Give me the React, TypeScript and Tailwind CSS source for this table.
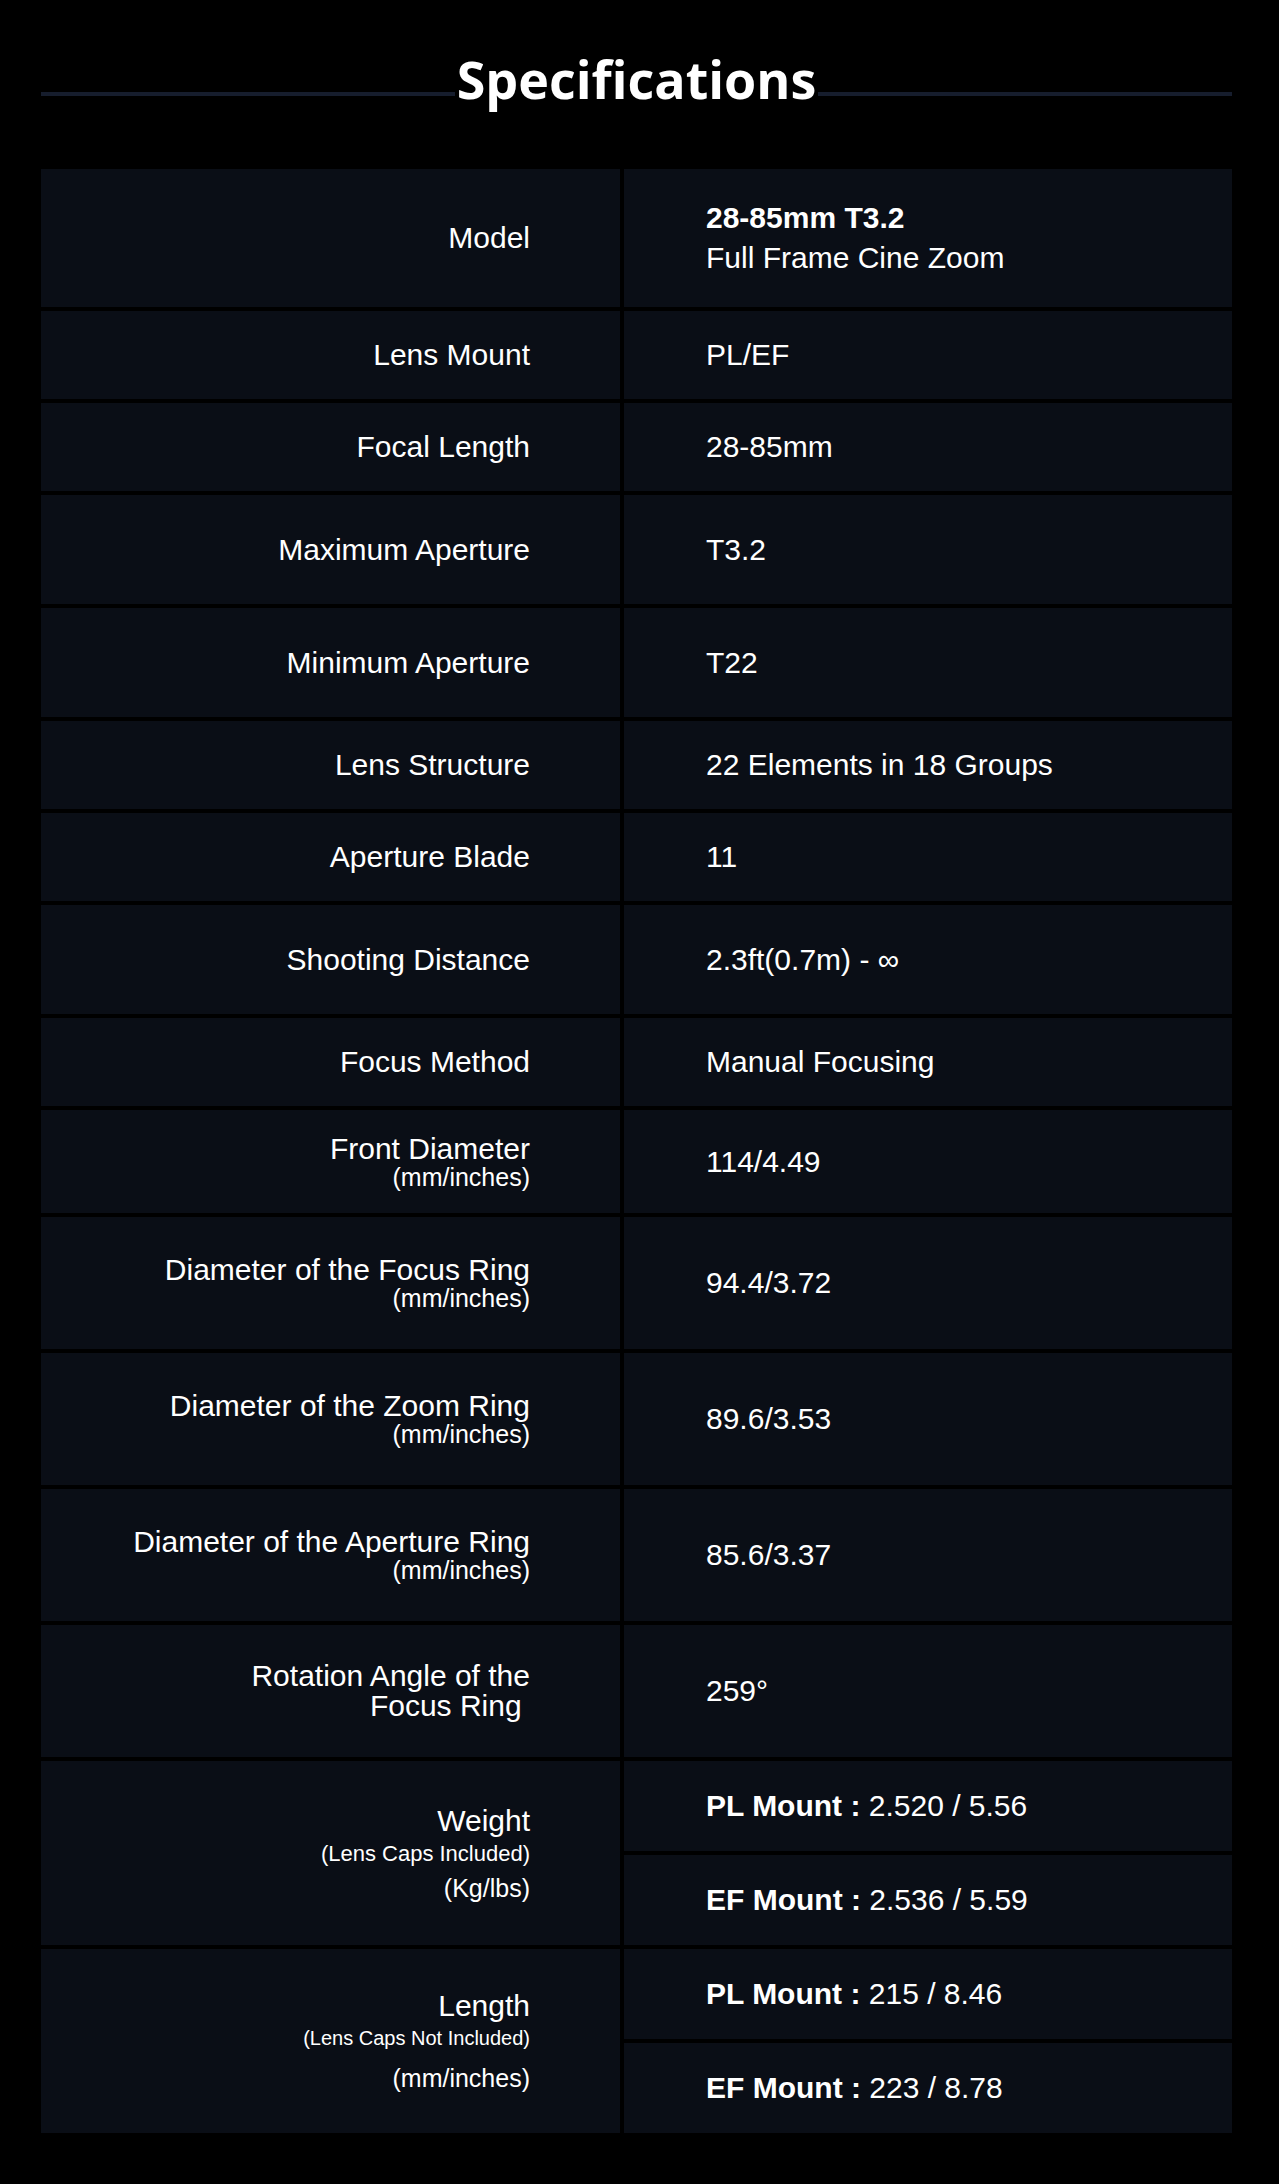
import React from 'react';

type Spec = {
  label: React.ReactNode;
  value?: React.ReactNode;
  split?: React.ReactNode[];
  height: string;
};

const Sub = ({ children, className = '' }: { children: React.ReactNode; className?: string }) => (
  <span className={`block text-[25px] leading-[26px] ${className}`}>{children}</span>
);

const specs: Spec[] = [
  {
    label: 'Model',
    value: (
      <div className="leading-[40px]">
        <div className="font-bold">28-85mm T3.2</div>
        <div>Full Frame Cine Zoom</div>
      </div>
    ),
    height: 'h-[138px]',
  },
  { label: 'Lens Mount', value: 'PL/EF', height: 'h-[88px]' },
  { label: 'Focal Length', value: '28-85mm', height: 'h-[88px]' },
  { label: 'Maximum Aperture', value: 'T3.2', height: 'h-[109px]' },
  { label: 'Minimum Aperture', value: 'T22', height: 'h-[109px]' },
  { label: 'Lens Structure', value: '22 Elements in 18 Groups', height: 'h-[88px]' },
  { label: 'Aperture Blade', value: '11', height: 'h-[88px]' },
  { label: 'Shooting Distance', value: '2.3ft(0.7m) - ∞', height: 'h-[109px]' },
  { label: 'Focus Method', value: 'Manual Focusing', height: 'h-[88px]' },
  {
    label: (
      <>
        Front Diameter
        <Sub>(mm/inches)</Sub>
      </>
    ),
    value: '114/4.49',
    height: 'h-[103px]',
  },
  {
    label: (
      <>
        Diameter of the Focus Ring
        <Sub>(mm/inches)</Sub>
      </>
    ),
    value: '94.4/3.72',
    height: 'h-[132px]',
  },
  {
    label: (
      <>
        Diameter of the Zoom Ring
        <Sub>(mm/inches)</Sub>
      </>
    ),
    value: '89.6/3.53',
    height: 'h-[132px]',
  },
  {
    label: (
      <>
        Diameter of the Aperture Ring
        <Sub>(mm/inches)</Sub>
      </>
    ),
    value: '85.6/3.37',
    height: 'h-[132px]',
  },
  {
    label: (
      <>
        Rotation Angle of the
        <br />
        Focus Ring{'\u00a0'}
      </>
    ),
    value: '259°',
    height: 'h-[132px]',
  },
  {
    label: (
      <>
        Weight
        <span className="block text-[22px] leading-[24px] mt-[6px]">(Lens Caps Included)</span>
        <Sub className="mt-[9px]">(Kg/lbs)</Sub>
      </>
    ),
    split: [
      <>
        <b>PL Mount :</b> 2.520 / 5.56
      </>,
      <>
        <b>EF Mount :</b> 2.536 / 5.59
      </>,
    ],
    height: 'h-[184px]',
  },
  {
    label: (
      <>
        Length
        <span className="block text-[20px] leading-[24px] mt-[5px]">(Lens Caps Not Included)</span>
        <Sub className="mt-[15px]">(mm/inches)</Sub>
      </>
    ),
    split: [
      <>
        <b>PL Mount :</b> 215 / 8.46
      </>,
      <>
        <b>EF Mount :</b> 223 / 8.78
      </>,
    ],
    height: 'h-[184px]',
  },
];

export default function App() {
  return (
    <div className="min-h-[2184px] bg-black pb-[51px] pt-[53px] text-white">
      {/* Title */}
      <div className="ml-[41px] flex w-[1191px] items-start">
        <div className="mt-[39px] h-1 flex-1 bg-[#161d2d]" />
        <h2 className="px-[2px] font-['Open_Sans',sans-serif] text-[52px] font-bold leading-[52px]">
          Specifications
        </h2>
        <div className="mt-[39px] h-1 flex-1 bg-[#161d2d]" />
      </div>

      {/* Spec table */}
      <div className="ml-[41px] mt-[64px] grid w-[1191px] grid-cols-[579px_608px] gap-1 font-['Liberation_Sans',Arial,sans-serif] text-[30px] leading-[30px]">
        {specs.map((spec, i) => (
          <React.Fragment key={i}>
            <div
              className={`flex flex-col items-end justify-center bg-[#0a0e16] pr-[90px] text-right ${spec.height}`}
            >
              <div>{spec.label}</div>
            </div>
            {spec.split ? (
              <div className="flex flex-col gap-1">
                {spec.split.map((item, j) => (
                  <div key={j} className="flex flex-1 items-center bg-[#0a0e16] pl-[82px]">
                    <div>{item}</div>
                  </div>
                ))}
              </div>
            ) : (
              <div className="flex items-center bg-[#0a0e16] pl-[82px]">
                <div>{spec.value}</div>
              </div>
            )}
          </React.Fragment>
        ))}
      </div>
    </div>
  );
}
